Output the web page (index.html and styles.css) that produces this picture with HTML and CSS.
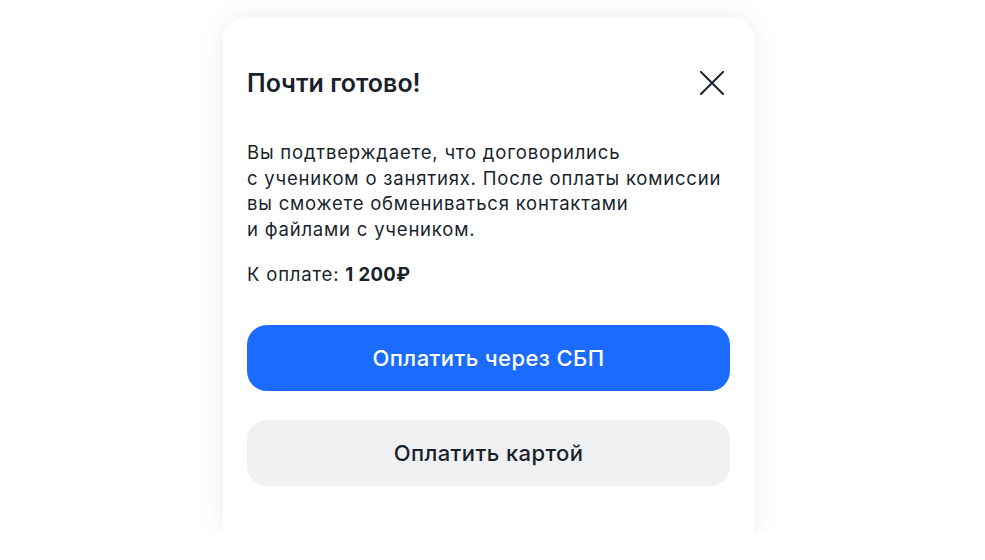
FILE: index.html
```html
<!DOCTYPE html>
<html lang="ru">
<head>
<meta charset="utf-8">
<title>Почти готово!</title>
<link rel="stylesheet" href="styles.css">
</head>
<body>
<div class="page">
  <div class="modal">
    <div class="modal-head">
      <h2 class="modal-title">Почти готово!</h2>
      <button class="close" aria-label="Закрыть">
        <svg width="24" height="24" viewBox="0 0 24 24" fill="none" stroke="#1a1f2c" stroke-width="2" stroke-linecap="round">
          <path d="M1 1 L23 23 M23 1 L1 23"/>
        </svg>
      </button>
    </div>
    <p class="modal-text">Вы подтверждаете, что договорились<br>с учеником о занятиях. После оплаты комиссии<br>вы сможете обмениваться контактами<br>и файлами с учеником.</p>
    <p class="modal-sum">К оплате: <b>1&nbsp;200₽</b></p>
    <div class="actions">
      <button class="btn btn-primary">Оплатить через СБП</button>
      <button class="btn btn-secondary">Оплатить картой</button>
    </div>
  </div>
</div>
</body>
</html>
```
FILE: styles.css
```css
html, body {
  margin: 0;
  padding: 0;
  background: #ffffff;
}
body {
  font-family: Inter, "Noto Sans", sans-serif;
  color: #1a1f2c;
}
.page {
  display: flex;
  justify-content: center;
  padding-top: 17px;
  padding-right: 8px;
}
.modal {
  box-sizing: border-box;
  width: 531px;
  height: 516px;
  padding: 24px 24px 0 24px;
  background: #fff;
  border-radius: 22px 22px 0 0;
  box-shadow: 0 0 28px rgba(20, 30, 50, 0.08);
  display: flex;
  flex-direction: column;
}
.modal-head {
  display: flex;
  align-items: center;
  justify-content: space-between;
  margin-top: 27px;
  height: 30px;
}
.modal-title {
  margin: 0;
  font-size: 25px;
  font-weight: 600;
  letter-spacing: 0;
  line-height: 30px;
}
.close {
  border: 0;
  background: none;
  padding: 0;
  width: 24px;
  height: 24px;
  margin-right: 6px;
  display: flex;
}
.modal-text {
  margin: 42px 0 0 0;
  font-size: 18.5px;
  line-height: 25.6px;
  letter-spacing: 0.8px;
}
.modal-sum {
  margin: 19px 0 0 0;
  font-size: 18.5px;
  line-height: 26px;
  letter-spacing: 0.8px;
}
.modal-sum b {
  font-weight: 700;
  letter-spacing: 0.4px;
}
.actions {
  display: flex;
  flex-direction: column;
  gap: 29px;
  margin-top: 38px;
}
.btn {
  height: 66px;
  border: 0;
  border-radius: 20px;
  font-family: Inter, "Noto Sans", sans-serif;
  font-size: 22px;
  font-weight: 500;
  letter-spacing: 0.4px;
}
.btn-primary {
  background: #1b6bff;
  color: #fff;
}
.btn-secondary {
  background: #f0f1f3;
  color: #1a1f2c;
}
```
